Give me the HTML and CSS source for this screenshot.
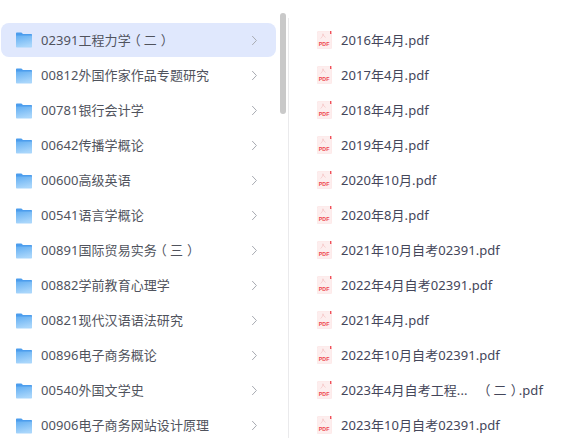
FILE: index.html
```html
<!DOCTYPE html>
<html lang="en">
  <head>
    <meta charset="UTF-8" />
    <meta name="viewport" content="width=device-width, initial-scale=1.0" />
    <title>Files</title>
    <link rel="stylesheet" href="styles.css">
  </head>

  <body>
    <svg class="defs" width="0" height="0">
      <defs>
        <linearGradient id="folder-grad" x1="0" y1="0" x2="0.3" y2="1">
          <stop offset="0" stop-color="#62aef2" />
          <stop offset="1" stop-color="#a9d6fb" />
        </linearGradient>
        <symbol id="folder" viewBox="0 0 16 16">
          <path d="M0 1.2C0 .7.3.4.8.4h4.6l1.6 1.7h8.3c.4 0 .7.3.7.7v3H0z" fill="#4c9ded" />
          <path d="M0 3.4h16v11.4c0 .4-.3.7-.7.7H.7c-.4 0-.7-.3-.7-.7z" fill="url(#folder-grad)" />
          <rect x="13" y="7.5" width="1" height="1" fill="#8cc3f3" />
        </symbol>
        <symbol id="pdf" viewBox="0 0 15 18">
          <path d="M1 .5h11.5l2 2V17a.7.7 0 0 1-.7.7H1a.7.7 0 0 1-.7-.7V1.2A.7.7 0 0 1 1 .5z" fill="#fdeeee" stroke="#fbe3e3" stroke-width=".6" />
          <rect x="13" y="0" width="1.4" height="3" fill="#f0505a" />
          <path d="M3.6 7.4C5 6.6 6 4.6 6 2.8c.4 1.7 1.2 2.9 2.6 3.6" fill="none" stroke="#f5c4c4" stroke-width=".8" />
          <text class="pdf-label" x="1.8" y="14.8" textLength="10.6" lengthAdjust="spacingAndGlyphs">PDF</text>
        </symbol>
        <symbol id="chevron" viewBox="0 0 7 11">
          <path d="M1.2 1l4.2 4.5-4.2 4.5" fill="none" stroke="#a9acb3" stroke-width="1" />
        </symbol>
      </defs>
    </svg>

    <div class="panel">
      <ul class="folders">
        <li class="folder active"><svg class="folder-icon"><use href="#folder" /></svg><span class="name">02391工程力学<span class="lp">（</span>二<span class="rp">）</span></span><svg class="chevron"><use href="#chevron" /></svg></li>
        <li class="folder"><svg class="folder-icon"><use href="#folder" /></svg><span class="name">00812外国作家作品专题研究</span><svg class="chevron"><use href="#chevron" /></svg></li>
        <li class="folder"><svg class="folder-icon"><use href="#folder" /></svg><span class="name">00781银行会计学</span><svg class="chevron"><use href="#chevron" /></svg></li>
        <li class="folder"><svg class="folder-icon"><use href="#folder" /></svg><span class="name">00642传播学概论</span><svg class="chevron"><use href="#chevron" /></svg></li>
        <li class="folder"><svg class="folder-icon"><use href="#folder" /></svg><span class="name">00600高级英语</span><svg class="chevron"><use href="#chevron" /></svg></li>
        <li class="folder"><svg class="folder-icon"><use href="#folder" /></svg><span class="name">00541语言学概论</span><svg class="chevron"><use href="#chevron" /></svg></li>
        <li class="folder"><svg class="folder-icon"><use href="#folder" /></svg><span class="name">00891国际贸易实务<span class="lp">（</span>三<span class="rp">）</span></span><svg class="chevron"><use href="#chevron" /></svg></li>
        <li class="folder"><svg class="folder-icon"><use href="#folder" /></svg><span class="name">00882学前教育心理学</span><svg class="chevron"><use href="#chevron" /></svg></li>
        <li class="folder"><svg class="folder-icon"><use href="#folder" /></svg><span class="name">00821现代汉语语法研究</span><svg class="chevron"><use href="#chevron" /></svg></li>
        <li class="folder"><svg class="folder-icon"><use href="#folder" /></svg><span class="name">00896电子商务概论</span><svg class="chevron"><use href="#chevron" /></svg></li>
        <li class="folder"><svg class="folder-icon"><use href="#folder" /></svg><span class="name">00540外国文学史</span><svg class="chevron"><use href="#chevron" /></svg></li>
        <li class="folder"><svg class="folder-icon"><use href="#folder" /></svg><span class="name">00906电子商务网站设计原理</span><svg class="chevron"><use href="#chevron" /></svg></li>
      </ul>

      <div class="track"><div class="thumb"></div></div>

      <ul class="files">
        <li class="file"><svg class="pdf-icon"><use href="#pdf" /></svg><span class="name">2016年4月.pdf</span></li>
        <li class="file"><svg class="pdf-icon"><use href="#pdf" /></svg><span class="name">2017年4月.pdf</span></li>
        <li class="file"><svg class="pdf-icon"><use href="#pdf" /></svg><span class="name">2018年4月.pdf</span></li>
        <li class="file"><svg class="pdf-icon"><use href="#pdf" /></svg><span class="name">2019年4月.pdf</span></li>
        <li class="file"><svg class="pdf-icon"><use href="#pdf" /></svg><span class="name">2020年10月.pdf</span></li>
        <li class="file"><svg class="pdf-icon"><use href="#pdf" /></svg><span class="name">2020年8月.pdf</span></li>
        <li class="file"><svg class="pdf-icon"><use href="#pdf" /></svg><span class="name">2021年10月自考02391.pdf</span></li>
        <li class="file"><svg class="pdf-icon"><use href="#pdf" /></svg><span class="name">2022年4月自考02391.pdf</span></li>
        <li class="file"><svg class="pdf-icon"><use href="#pdf" /></svg><span class="name">2021年4月.pdf</span></li>
        <li class="file"><svg class="pdf-icon"><use href="#pdf" /></svg><span class="name">2022年10月自考02391.pdf</span></li>
        <li class="file"><svg class="pdf-icon"><use href="#pdf" /></svg><span class="name">2023年4月自考工程...　<span class="lp">（</span>二<span class="rp">）</span>.pdf</span></li>
        <li class="file"><svg class="pdf-icon"><use href="#pdf" /></svg><span class="name">2023年10月自考02391.pdf</span></li>
      </ul>
    </div>
  </body>
</html>
```

FILE: styles.css
```css
* {
  margin: 0;
  padding: 0;
  box-sizing: border-box;
  font-family: 'Noto Sans', 'Noto Sans CJK SC', sans-serif;
}

html,
body {
  height: 100%;
  overflow: hidden;
  background: #fff;
}

ul {
  list-style: none;
}

.defs {
  display: block;
  height: 0;
}

.panel {
  display: flex;
  height: 438px;
  overflow: hidden;
}

.folders {
  width: 275px;
  margin-left: 1px;
  padding-top: 23px;
  flex-shrink: 0;
}

.folder {
  display: flex;
  align-items: center;
  height: 35px;
  padding-left: 15px;
  font-size: 13px;
  color: #50535d;
  border-radius: 8px;
}

.folder.active {
  background: #e0e8fd;
  height: 34px;
  margin-bottom: 1px;
}

.folder-icon {
  width: 16px;
  height: 16px;
  margin-right: 9px;
  flex-shrink: 0;
}

.name {
  flex: 1;
  margin-bottom: 2px;
  white-space: nowrap;
  letter-spacing: 0.06px;
  text-spacing-trim: space-all;
}

/* full-width brackets sit centred in their cell in the original font */
.lp,
.rp {
  font-feature-settings: 'halt' 1;
}

.lp {
  margin-left: 3.5px;
  margin-right: 3px;
}

.rp {
  margin-left: 4px;
  margin-right: 1.5px;
}

.chevron {
  width: 7px;
  height: 11px;
  margin-right: 18px;
}

.track {
  width: 9px;
  margin-left: 4px;
  padding-top: 13px;
  background: linear-gradient(#eaeaec, #eaeaec) no-repeat right 18px / 1px 100%;
  flex-shrink: 0;
}

.thumb {
  width: 6px;
  height: 101px;
  background: #c9c9c9;
  border-radius: 3px;
}

.files {
  padding-top: 23px;
  padding-left: 28px;
  flex: 1;
}

.file {
  display: flex;
  align-items: center;
  height: 35px;
  font-size: 13px;
  color: #44465a;
}

.pdf-icon {
  width: 15px;
  height: 18px;
  margin-right: 9px;
  margin-bottom: 1px;
  flex-shrink: 0;
}

.pdf-label {
  font-family: 'Liberation Sans', sans-serif;
  font-size: 5.6px;
  font-weight: 700;
  fill: #ee4650;
}
```
